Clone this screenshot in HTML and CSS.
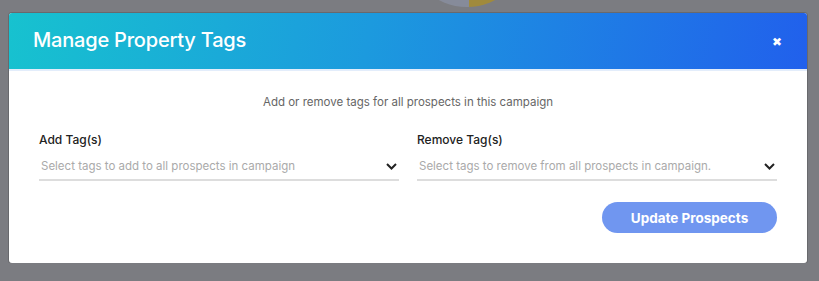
FILE: index.html
```html
<!DOCTYPE html>
<html lang="en">
<head>
  <meta charset="UTF-8" />
  <meta name="viewport" content="width=device-width, initial-scale=1.0" />
  <title>Manage Property Tags</title>
  <link rel="stylesheet" href="styles.css">
</head>
<body>
  <div class="backdrop">
    <div class="chart"></div>
  </div>

  <div class="modal">
    <div class="modal-header">
      <h2>Manage Property Tags</h2>
      <span class="close">&#10006;</span>
    </div>
    <div class="modal-body">
      <p class="hint">Add or remove tags for all prospects in this campaign</p>
      <div class="fields">
        <div class="field">
          <label>Add Tag(s)</label>
          <div class="select">
            <span>Select tags to add to all prospects in campaign</span>
            <svg width="11" height="7" viewBox="0 0 11 7"><path d="M1 1l4.5 4.5L10 1" fill="none" stroke="#222" stroke-width="2"/></svg>
          </div>
        </div>
        <div class="field">
          <label>Remove Tag(s)</label>
          <div class="select">
            <span>Select tags to remove from all prospects in campaign.</span>
            <svg width="11" height="7" viewBox="0 0 11 7"><path d="M1 1l4.5 4.5L10 1" fill="none" stroke="#222" stroke-width="2"/></svg>
          </div>
        </div>
      </div>
      <div class="actions">
        <button>Update Prospects</button>
      </div>
    </div>
  </div>
</body>
</html>
```

FILE: styles.css
```css
body {
  font-family: Inter, 'Liberation Sans', sans-serif;
  background-color: #7b7c81;
  color: #333;
  margin: 0;
  padding: 13px 12px 0 9px;
}
.backdrop {
  position: absolute;
  top: 0;
  left: 0;
  width: 100%;
  height: 14px;
  overflow: hidden;
}
.chart {
  position: absolute;
  left: 407px;
  top: -113px;
  width: 120px;
  height: 120px;
  border-radius: 50%;
  background: conic-gradient(#a08a3c 0 178deg, #868b9a 178deg 360deg);
}
.modal {
  position: relative;
  background-color: #fff;
  border-radius: 3px;
  box-shadow: 0 0 0 1px rgba(0, 0, 0, 0.15);
  overflow: hidden;
  height: 250px;
}
.modal-header {
  display: flex;
  align-items: center;
  justify-content: space-between;
  height: 56px;
  padding: 0 24px;
  background: linear-gradient(100deg, #17c2cf 0%, #1c9ade 45%, #2160ec 100%);
  border-bottom: 2px solid #e3edfb;
  color: #fff;
}
.modal-header h2 {
  margin: 0 0 2px;
  font-size: 20px;
  font-weight: 500;
  letter-spacing: -0.2px;
}
.close {
  font-size: 12px;
  margin-right: 1px;
}
.modal-body {
  padding: 0 30px;
}
.hint {
  margin: 24px 0 0;
  text-align: center;
  font-size: 11.5px;
  color: #666;
}
.fields {
  display: grid;
  grid-template-columns: 1fr 1fr;
  gap: 18px;
  margin-top: 23px;
}
.field label {
  display: block;
  font-size: 12px;
  font-weight: 500;
  color: #222;
}
.select {
  display: flex;
  align-items: center;
  justify-content: space-between;
  margin-top: 12px;
  padding: 0 2px 6px;
  border-bottom: 2px solid #ddd;
  font-size: 11.5px;
  color: #aaa;
}
.actions {
  display: flex;
  justify-content: flex-end;
  margin-top: 21px;
}
button {
  width: 175px;
  height: 31px;
  background-color: #7096f0;
  color: #fff;
  border: none;
  border-radius: 16px;
  font-family: inherit;
  font-size: 13.5px;
  font-weight: 700;
  cursor: pointer;
}
```
